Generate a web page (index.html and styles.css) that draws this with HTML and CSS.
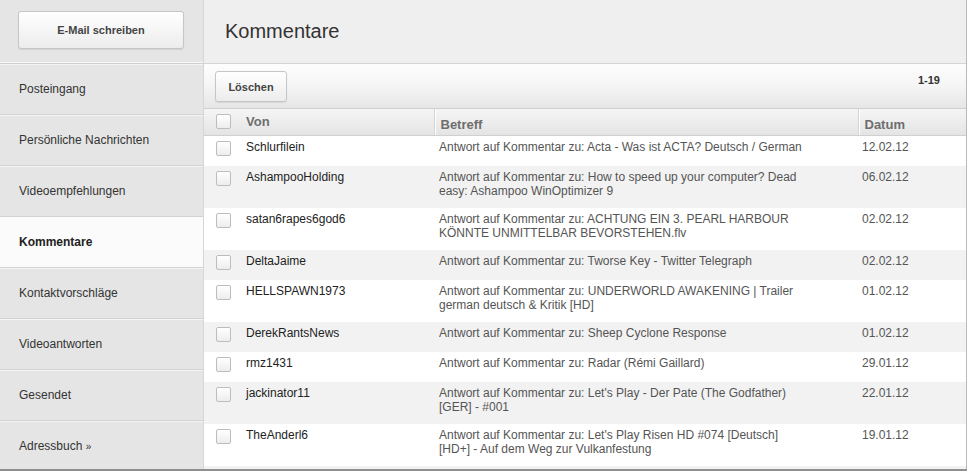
FILE: index.html
```html
<!DOCTYPE html>
<html lang="de">
<head>
    <meta charset="UTF-8">
    <link rel="stylesheet" href="styles.css">
    <title>Kommentare</title>
</head>
<body>

<div class="page">
    <div class="sidebar">
        <div class="sidebar-top">
            <button class="btn btn-compose">E-Mail schreiben</button>
        </div>
        <ul class="nav">
            <li>Posteingang</li>
            <li>Persönliche Nachrichten</li>
            <li>Videoempfehlungen</li>
            <li class="active">Kommentare</li>
            <li>Kontaktvorschläge</li>
            <li>Videoantworten</li>
            <li>Gesendet</li>
            <li>Adressbuch <span class="raquo">»</span></li>
        </ul>
    </div>

    <div class="main">
        <div class="main-header">
            <h1>Kommentare</h1>
        </div>
        <div class="toolbar">
            <button class="btn btn-delete">Löschen</button>
            <span class="count">1-19</span>
        </div>
        <table class="messages">
            <colgroup>
                <col class="w-check">
                <col class="w-from">
                <col class="w-subject">
                <col>
            </colgroup>
            <thead>
                <tr>
                    <th class="col-check"><span class="checkbox"></span></th>
                    <th class="col-from">Von</th>
                    <th class="col-subject">Betreff</th>
                    <th class="col-date">Datum</th>
                </tr>
            </thead>
            <tbody>
                <tr>
                    <td class="col-check"><span class="checkbox"></span></td>
                    <td class="col-from">Schlurfilein</td>
                    <td class="col-subject">Antwort auf Kommentar zu: Acta - Was ist ACTA? Deutsch / German</td>
                    <td class="col-date">12.02.12</td>
                </tr>
                <tr>
                    <td class="col-check"><span class="checkbox"></span></td>
                    <td class="col-from">AshampooHolding</td>
                    <td class="col-subject">Antwort auf Kommentar zu: How to speed up your computer? Dead easy: Ashampoo WinOptimizer 9</td>
                    <td class="col-date">06.02.12</td>
                </tr>
                <tr>
                    <td class="col-check"><span class="checkbox"></span></td>
                    <td class="col-from">satan6rapes6god6</td>
                    <td class="col-subject">Antwort auf Kommentar zu: ACHTUNG EIN 3. PEARL HARBOUR KÖNNTE UNMITTELBAR BEVORSTEHEN.flv</td>
                    <td class="col-date">02.02.12</td>
                </tr>
                <tr>
                    <td class="col-check"><span class="checkbox"></span></td>
                    <td class="col-from">DeltaJaime</td>
                    <td class="col-subject">Antwort auf Kommentar zu: Tworse Key - Twitter Telegraph</td>
                    <td class="col-date">02.02.12</td>
                </tr>
                <tr>
                    <td class="col-check"><span class="checkbox"></span></td>
                    <td class="col-from">HELLSPAWN1973</td>
                    <td class="col-subject">Antwort auf Kommentar zu: UNDERWORLD AWAKENING | Trailer german deutsch &amp; Kritik [HD]</td>
                    <td class="col-date">01.02.12</td>
                </tr>
                <tr>
                    <td class="col-check"><span class="checkbox"></span></td>
                    <td class="col-from">DerekRantsNews</td>
                    <td class="col-subject">Antwort auf Kommentar zu: Sheep Cyclone Response</td>
                    <td class="col-date">01.02.12</td>
                </tr>
                <tr>
                    <td class="col-check"><span class="checkbox"></span></td>
                    <td class="col-from">rmz1431</td>
                    <td class="col-subject">Antwort auf Kommentar zu: Radar (Rémi Gaillard)</td>
                    <td class="col-date">29.01.12</td>
                </tr>
                <tr>
                    <td class="col-check"><span class="checkbox"></span></td>
                    <td class="col-from">jackinator11</td>
                    <td class="col-subject">Antwort auf Kommentar zu: Let's Play - Der Pate (The Godfather) [GER] - #001</td>
                    <td class="col-date">22.01.12</td>
                </tr>
                <tr>
                    <td class="col-check"><span class="checkbox"></span></td>
                    <td class="col-from">TheAnderl6</td>
                    <td class="col-subject">Antwort auf Kommentar zu: Let's Play Risen HD #074 [Deutsch] [HD+] - Auf dem Weg zur Vulkanfestung</td>
                    <td class="col-date">19.01.12</td>
                </tr>
                <tr class="row-partial">
                    <td class="col-check"><span class="checkbox"></span></td>
                    <td class="col-from"></td>
                    <td class="col-subject"></td>
                    <td class="col-date"></td>
                </tr>
            </tbody>
        </table>
    </div>
</div>

</body>
</html>
```

FILE: styles.css
```css
body {
    margin: 0;
    background-color: #fff;
    font-family: "Liberation Sans", Arial, sans-serif;
    font-size: 12px;
    color: #333;
}

.page {
    display: flex;
    width: 967px;
    height: 469px;
    overflow: hidden;
    border-bottom: 2px solid #8f8f8f;
}

/* sidebar */

.sidebar {
    width: 203px;
    flex-shrink: 0;
    background-color: #e5e5e5;
    border-right: 1px solid #d6d6d6;
}

.sidebar-top {
    height: 63px;
    padding: 11px 0 0 18px;
    box-sizing: border-box;
    border-bottom: 1px solid #f7f7f7;
    box-shadow: 0 1px 0 #cfcfcf;
}

.btn {
    font-family: "Liberation Sans", Arial, sans-serif;
    font-size: 11px;
    font-weight: bold;
    color: #444;
    background: linear-gradient(#fff, #ececec);
    border: 1px solid #c6c6c6;
    border-radius: 3px;
    box-shadow: 0 1px 1px rgba(0, 0, 0, 0.08);
    cursor: pointer;
}

.btn-compose {
    width: 166px;
    height: 38px;
}

.btn-delete {
    width: 72px;
    height: 31px;
}

.nav {
    list-style: none;
    margin: 1px 0 0 0;
    padding: 0;
}

.nav li {
    height: 50px;
    line-height: 51px;
    padding-left: 19px;
    color: #333;
    border-bottom: 1px solid #d2d2d2;
    box-shadow: inset 0 1px 0 #f5f5f5;
}

.nav li.active {
    background-color: #fbfbfb;
    font-weight: bold;
    color: #222;
    box-shadow: none;
}

.raquo {
    font-size: 10px;
}

/* main */

.main {
    flex: 1;
    border-right: 1px solid #b9b9b9;
    background-color: #fff;
}

.main-header {
    height: 63px;
    background-color: #efefef;
    border-bottom: 1px solid #d4d4d4;
    display: flex;
    align-items: center;
}

.main-header h1 {
    margin: 0 0 0 21px;
    font-size: 20px;
    font-weight: normal;
    color: #333;
}

.toolbar {
    height: 45px;
    padding: 7px 26px 0 11px;
    box-sizing: border-box;
    display: flex;
    justify-content: space-between;
    align-items: flex-start;
    background: linear-gradient(#fdfdfd 0%, #f6f6f6 45%, #e6e6e6 100%);
    border-bottom: 1px solid #d0d0d0;
}

.count {
    margin-top: 3px;
    font-size: 11px;
    font-weight: bold;
    color: #333;
}

/* table */

.messages {
    width: 100%;
    border-collapse: collapse;
    table-layout: fixed;
}

.w-check {
    width: 36px;
}

.w-from {
    width: 194px;
}

.w-subject {
    width: 424px;
}

.messages th {
    height: 24px;
    padding: 0 0 2px 6px;
    text-align: left;
    vertical-align: middle;
    font-size: 13px;
    font-weight: bold;
    color: #6e6e6e;
    background: linear-gradient(#f5f5f5, #e4e4e4);
    border-bottom: 1px solid #d0d0d0;
}

.messages th.col-subject,
.messages th.col-date {
    height: 22px;
    padding-top: 4px;
    padding-bottom: 0;
    border-left: 1px solid #d4d4d4;
    box-shadow: inset 1px 0 0 #fff;
}

.messages td {
    padding: 4px 0 10px 6px;
    vertical-align: top;
    line-height: 14px;
}

.messages tbody tr:nth-child(even) td {
    background-color: #f2f2f2;
}

.messages th.col-check,
.messages td.col-check {
    padding-left: 12px;
}

.col-from {
    color: #222;
}

.messages td.col-subject {
    padding-left: 5px;
    padding-right: 50px;
    color: #555;
}

.messages td.col-date {
    padding-left: 4px;
    color: #555;
}

.messages th.col-date {
    padding-left: 6px;
}

.checkbox {
    display: block;
    width: 13px;
    height: 13px;
    border: 1px solid #bdbdbd;
    border-radius: 2px;
    background: linear-gradient(#fff, #ededed);
}

.messages td .checkbox {
    margin-top: 1px;
}
```
